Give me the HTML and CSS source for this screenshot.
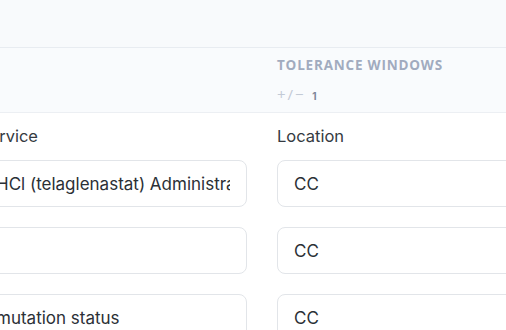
FILE: index.html
```html
<!DOCTYPE html>
<html lang="en">
<head>
    <meta charset="UTF-8">
    <meta name="viewport" content="width=device-width, initial-scale=1.0">
    <title>Tolerance Windows</title>
    <link rel="stylesheet" href="styles.css">
</head>
<body>

    <!-- Panel header strip -->
    <div class="topbar"></div>

    <!-- Column headings -->
    <div class="head">
        <div class="grid">
            <div></div>
            <div class="head-cell">
                <div class="head-title">Tolerance Windows</div>
                <div class="head-value"><span class="pm">+/&minus;</span> <b>1</b></div>
            </div>
        </div>
    </div>

    <!-- Rows -->
    <div class="rows">
        <div class="grid">
            <label class="field-label">Service</label>
            <label class="field-label">Location</label>

            <input class="field" type="text" value="HCl (telaglenastat) Administration">
            <input class="field" type="text" value="CC">

            <input class="field" type="text" value="">
            <input class="field" type="text" value="CC">

            <input class="field" type="text" value="mutation status">
            <input class="field" type="text" value="CC">
        </div>
    </div>

</body>
</html>
```

FILE: styles.css
```css
* { margin: 0; padding: 0; box-sizing: border-box; }
html, body { width: 506px; height: 330px; overflow: hidden; }
body { background: #fff; font-family: Inter, "Noto Sans", sans-serif; color: #30353c; }

.grid { display: grid; grid-template-columns: 268px 268px; column-gap: 30px; margin-left: -21px; }

/* Top strip */
.topbar { height: 48px; background: #f8fafc; border-bottom: 1px solid #e8ecf1; }

/* Column heading strip */
.head { height: 65px; background: #f9fbfd; border-bottom: 1px solid #eceff3; padding-top: 9px; }
.head-title {
    font-family: "Open Sans", sans-serif; font-weight: 700; font-size: 13.5px; line-height: 16px;
    text-transform: uppercase; letter-spacing: 0.8px; color: #a1abbf;
}
.head-value { margin-top: 12px; font-size: 13px; line-height: 18px; color: #c3cad6; }
.head-value .pm { font-family: "Open Sans", sans-serif; font-size: 15px; letter-spacing: 2px; }
.head-value b { font-size: 10px; font-weight: 700; color: #7d8799; margin-left: 3px; }

/* Rows */
.rows { padding-top: 11px; }
.rows .grid { row-gap: 20px; }
.field-label { font-size: 16.5px; line-height: 24px; color: #353a41; margin-bottom: -8px; }
.field {
    height: 47px; width: 100%; border: 1px solid #e2e5e9; border-radius: 8px;
    padding: 0 16px; font-family: Inter, "Noto Sans", sans-serif; font-size: 17px; color: #2b3036;
    background: #fff; outline: none;
}
```
